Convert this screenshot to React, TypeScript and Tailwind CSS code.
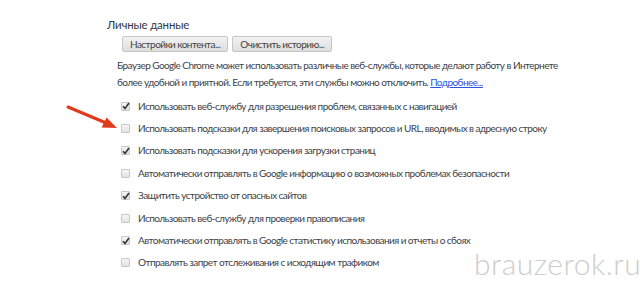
import React from "react";

const options = [
  { label: "Использовать веб-службу для разрешения проблем, связанных с навигацией", checked: true },
  { label: "Использовать подсказки для завершения поисковых запросов и URL, вводимых в адресную строку", checked: false },
  { label: "Использовать подсказки для ускорения загрузки страниц", checked: true },
  { label: "Автоматически отправлять в Google информацию о возможных проблемах безопасности", checked: false },
  { label: "Защитить устройство от опасных сайтов", checked: true },
  { label: "Использовать веб-службу для проверки правописания", checked: false },
  { label: "Автоматически отправлять в Google статистику использования и отчеты о сбоях", checked: true },
  { label: "Отправлять запрет отслеживания с исходящим трафиком", checked: false },
];

function Checkbox({ checked }: { checked: boolean }) {
  return (
    <div className="w-[9px] h-[9px] shrink-0 rounded-[1px] border border-[#c8c8c8] bg-gradient-to-b from-[#f6f6f6] to-[#e2e2e2] flex items-center justify-center">
      {checked && (
        <svg width="8" height="8" viewBox="0 0 8 8" className="overflow-visible">
          <path d="M1 4.2 L3 6.4 L7 1" fill="none" stroke="#3a3a3a" strokeWidth="1.7" />
        </svg>
      )}
    </div>
  );
}

export default function App() {
  return (
    <div className="relative w-[640px] h-[284px] bg-white overflow-hidden font-['Lato',sans-serif] text-[10px] tracking-[-0.55px] text-[#3c4249]">
      <div className="pl-[107px] pt-[17px]">
        <h2 className="text-[11.5px] tracking-[-0.2px] text-[#303942] leading-[16px]">Личные данные</h2>
        <div className="pl-[15px] mt-[3px] flex gap-[4px]">
          <button className="h-[16px] px-[7px] border border-[#c6c6c6] rounded-[2px] bg-gradient-to-b from-[#f2f2f2] to-[#dedede] text-[#444] text-[10px] leading-[14px]">
            Настройки контента...
          </button>
          <button className="h-[16px] px-[7px] border border-[#c6c6c6] rounded-[2px] bg-gradient-to-b from-[#f2f2f2] to-[#dedede] text-[#444] text-[10px] leading-[14px]">
            Очистить историю...
          </button>
        </div>
        <p className="pl-[10px] mt-[5px] leading-[17px] whitespace-nowrap">
          Браузер Google Chrome может использовать различные веб-службы, которые делают работу в Интернете
          <br />
          более удобной и приятной. Если требуется, эти службы можно отключить.{" "}
          <span className="text-[#2a55d8] underline">Подробнее...</span>
        </p>
        <div className="pl-[14px] mt-[4px] flex flex-col">
          {options.map((o) => (
            <div key={o.label} className="h-[22.4px] flex items-center gap-[8px] whitespace-nowrap">
              <Checkbox checked={o.checked} />
              <span>{o.label}</span>
            </div>
          ))}
        </div>
      </div>

      <svg className="absolute left-[60px] top-[96px]" width="64" height="40" viewBox="0 0 64 40">
        <path d="M8 11 L45 26.5" stroke="#e03a1c" strokeWidth="3" strokeLinecap="round" />
        <path d="M57 32 L41.6 31.6 L46.6 21.4 Z" fill="#e03a1c" />
      </svg>

      <div className="absolute left-[474px] top-[246px] text-[30px] leading-[34px] text-[#cdcdcd] font-['Lato',sans-serif] font-light tracking-[0.5px]">
        brauzerok.ru
      </div>
    </div>
  );
}
